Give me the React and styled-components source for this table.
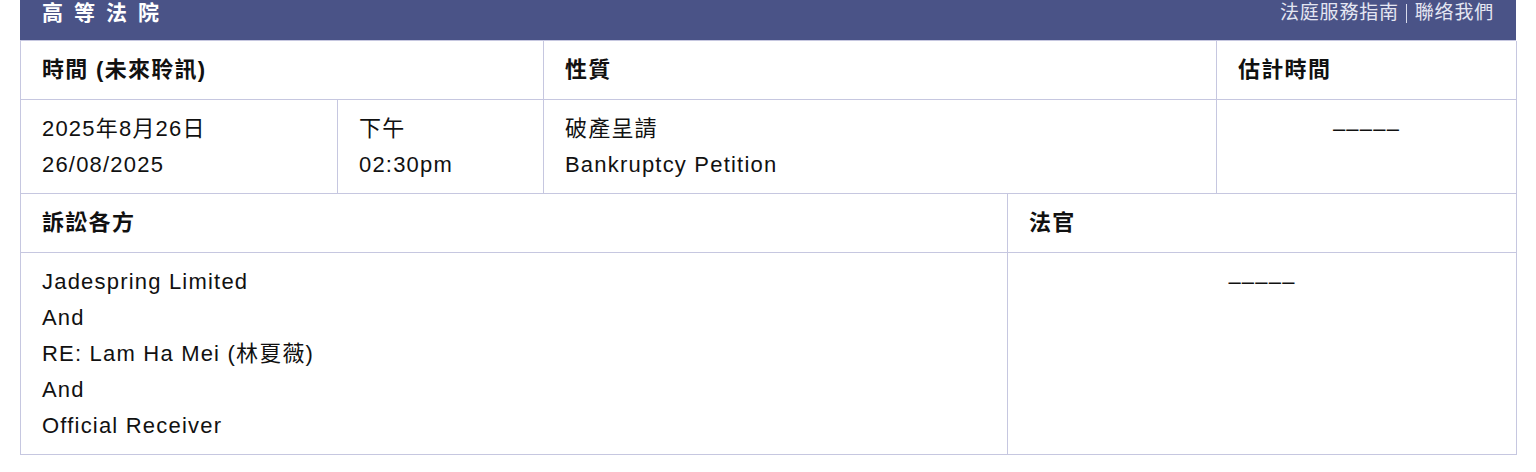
import React from 'react'
import styled, { createGlobalStyle } from 'styled-components'

const GlobalStyle = createGlobalStyle`
  body {
    margin: 0;
    background: #ffffff;
    font-family: "Liberation Sans", "Noto Sans CJK TC", sans-serif;
    color: #111111;
  }
`

const Page = styled.div`
  padding: 0 20px;
`

const TopBar = styled.div`
  display: flex;
  justify-content: space-between;
  align-items: flex-start;
  height: 40px;
  padding: 0 22px;
  background: #4a5387;
  color: #ffffff;
  border-bottom: 1px solid #c6c7e0;
`

const Title = styled.div`
  font-size: 21px;
  font-weight: bold;
  line-height: 26px;
  letter-spacing: 11px;
`

const Links = styled.div`
  display: flex;
  align-items: center;
  font-size: 19px;
  line-height: 26px;
  letter-spacing: 0.8px;
  color: #e4e6f2;
`

const Sep = styled.span`
  display: inline-block;
  width: 1px;
  height: 19px;
  margin: 0 8px 0 7px;
  background: #d8dbec;
`

const Table = styled.table`
  width: 100%;
  border-collapse: collapse;
  table-layout: fixed;
`

const Head = styled.th`
  border: 1px solid #c6c7e0;
  border-top: none;
  padding: 11px 21px;
  font-size: 22px;
  line-height: 36px;
  font-weight: bold;
  letter-spacing: 1.3px;
  text-align: left;
`

const Cell = styled.td`
  border: 1px solid #c6c7e0;
  padding: 11px 21px 10px;
  font-size: 22px;
  line-height: 36px;
  letter-spacing: 1.2px;
  vertical-align: top;
  text-align: ${p => (p.$center ? 'center' : 'left')};
`

function App() {
  return (
    <Page>
      <GlobalStyle />
      <TopBar>
        <Title>高等法院</Title>
        <Links>
          法庭服務指南<Sep />聯络我們
        </Links>
      </TopBar>
      <Table>
        <colgroup>
          <col style={{ width: '317px' }} />
          <col style={{ width: '206px' }} />
          <col style={{ width: '673px' }} />
          <col style={{ width: '300px' }} />
        </colgroup>
        <thead>
          <tr>
            <Head colSpan={2}>時間 (未來聆訊)</Head>
            <Head>性質</Head>
            <Head>估計時間</Head>
          </tr>
        </thead>
        <tbody>
          <tr>
            <Cell>2025年8月26日<br />26/08/2025</Cell>
            <Cell>下午<br />02:30pm</Cell>
            <Cell>破產呈請<br />Bankruptcy Petition</Cell>
            <Cell $center>–––––</Cell>
          </tr>
        </tbody>
      </Table>
      <Table>
        <colgroup>
          <col style={{ width: '987px' }} />
          <col style={{ width: '509px' }} />
        </colgroup>
        <thead>
          <tr>
            <Head>訴訟各方</Head>
            <Head>法官</Head>
          </tr>
        </thead>
        <tbody>
          <tr>
            <Cell>
              Jadespring Limited<br />
              And<br />
              RE: Lam Ha Mei (林夏薇)<br />
              And<br />
              Official Receiver
            </Cell>
            <Cell $center>–––––</Cell>
          </tr>
        </tbody>
      </Table>
    </Page>
  )
}

export default App
